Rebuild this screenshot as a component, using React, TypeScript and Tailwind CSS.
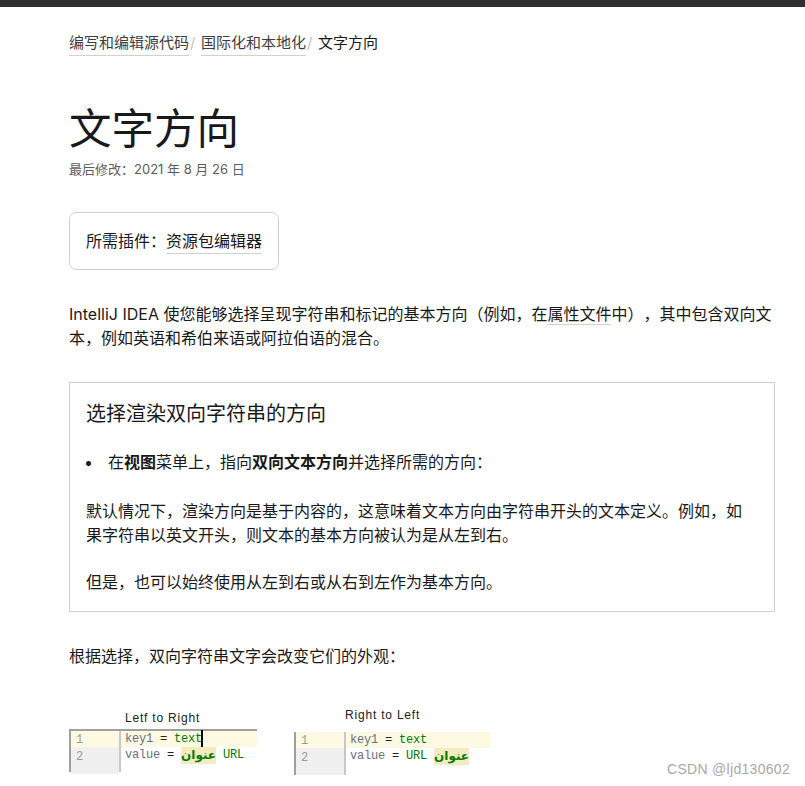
const sans = "font-['Inter','Noto_Sans_CJK_SC',sans-serif]";

function Link({ children, className = "" }: { children: React.ReactNode; className?: string }) {
  return <span className={`border-b border-[#d1d1d2] ${className}`}>{children}</span>;
}

function Figure({
  title,
  rtl,
  className,
  titleClass,
}: {
  title: string;
  rtl?: boolean;
  className: string;
  titleClass: string;
}) {
  const arabic = (
    <span className="inline-block h-[17px] w-[35px] bg-[#f5ebc1] text-center align-top font-['DejaVu_Sans',sans-serif] text-[12px] font-bold leading-[16px] tracking-normal text-[#007a00]">
      عنوان
    </span>
  );
  return (
    <div className={className}>
      <div className={`font-['Liberation_Sans',sans-serif] text-[12px] leading-[14px] tracking-[0.8px] text-[#222] ${titleClass}`}>
        {title}
      </div>
      <div className={`flex border-l-2 border-[#a0a0a0] ${rtl ? "h-[43px]" : "h-[43px] border-t-2"}`}>
        <div className="w-[50px] shrink-0 border-r-2 border-[#c8c8c8] font-['Liberation_Mono',monospace] text-[12px] leading-[16px] text-[#999]">
          <div className="h-[16px] bg-[#fdf9e3] pl-[5px] pt-[1px]">1</div>
          <div className="h-[27px] bg-[#f0f0f0] pl-[5px] pt-[2px]">2</div>
        </div>
        <div className="flex-1 font-['Liberation_Mono',monospace] text-[12px] leading-[16px] tracking-[-0.2px]">
          <div className="relative h-[16px] whitespace-pre bg-[#fdf9e3] pl-[4px] text-[#6a7080]">
            key1 <span className="text-[#222]">=</span> <span className="text-[#007a00]">text</span>
            {!rtl && <span className="absolute left-[80px] top-[-1px] h-[17px] w-[2px] bg-black" />}
          </div>
          <div className="whitespace-pre pl-[4px] text-[#6a7080]">
            value <span className="text-[#222]">=</span>{" "}
            {rtl ? (
              <>
                <span className="text-[#007a00]">URL</span> {arabic}
              </>
            ) : (
              <>
                {arabic} <span className="text-[#007a00]">URL</span>
              </>
            )}
          </div>
        </div>
      </div>
    </div>
  );
}

export default function App() {
  return (
    <div className={`relative h-[786px] w-[805px] overflow-hidden bg-white ${sans} text-[16px] leading-[24px] text-[#19191c] [text-spacing-trim:space-all]`}>
      <div className="h-[7px] bg-[#2f2f31]" />
      <div className="pl-[69px] pr-[30px]">
        <div className="mt-[24px] flex h-[25px] items-start whitespace-nowrap text-[15px] text-[#19191c]">
          <Link className="text-[#3e3e41] leading-[24px]">编写和编辑源代码</Link>
          <span className="mx-[1px] w-[10px] text-[#c4c4c6]">/</span>
          <Link className="text-[#3e3e41] leading-[24px]">国际化和本地化</Link>
          <span className="mx-[1px] w-[10px] text-[#c4c4c6]">/</span>
          <span>文字方向</span>
        </div>
        <h1 className="mt-[45px] text-[42.5px] leading-[56px] font-normal text-[#19191c]">文字方向</h1>
        <div className="mt-[2px] text-[13px] leading-[20px] text-[#5d5d60]">最后修改：2021 年 8 月 26 日</div>

        <div className="mt-[33px] flex h-[58px] w-[210px] items-center rounded-[7px] border border-[#d1d1d2] px-[16px] whitespace-nowrap">
          所需插件：<Link>资源包编辑器</Link>
        </div>

        <p className="mt-[32px]">
          IntelliJ IDEA 使您能够选择呈现字符串和标记的基本方向（例如，在<Link>属性文件</Link>中），其中包含双向文本，例如英语和希伯来语或阿拉伯语的混合。
        </p>

        <div className="mt-[32px] h-[230px] border border-[#d1d1d2] px-[16px] pt-[17px]">
          <h2 className="text-[20px] leading-[28px] font-normal">选择渲染双向字符串的方向</h2>
          <div className="mt-[22px] flex">
            <span className="-ml-[2px] w-[24px] shrink-0">•</span>
            <span>
              在<b>视图</b>菜单上，指向<b>双向文本方向</b>并选择所需的方向：
            </span>
          </div>
          <p className="mt-[25px] pr-[16px]">
            默认情况下，渲染方向是基于内容的，这意味着文本方向由字符串开头的文本定义。例如，如果字符串以英文开头，则文本的基本方向被认为是从左到右。
          </p>
          <p className="mt-[23px]">但是，也可以始终使用从左到右或从右到左作为基本方向。</p>
        </div>

        <p className="mt-[32px]">根据选择，双向字符串文字会改变它们的外观：</p>

        <div className="mt-[43px] flex items-start">
          <Figure title="Letf to Right" className="w-[188px]" titleClass="pl-[56px] pb-[4px]" />
          <Figure title="Right to Left" rtl className="ml-[37px] w-[197px]" titleClass="pl-[51px] pb-[10px] -mt-[3px]" />
        </div>
      </div>
      <div className="absolute right-[15px] top-[761px] font-['Liberation_Sans',sans-serif] text-[14px] leading-[16px] tracking-[0.3px] text-[#a8a8a8]">
        CSDN @ljd130602
      </div>
    </div>
  );
}
